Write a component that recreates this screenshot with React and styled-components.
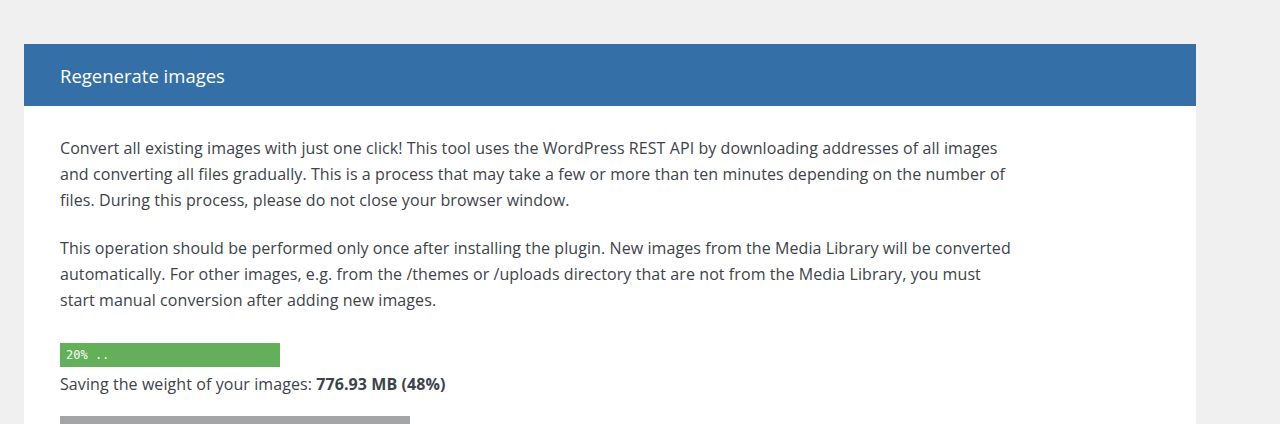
import React from 'react';
import styled, { createGlobalStyle } from 'styled-components';

const GlobalStyle = createGlobalStyle`
    html, body {
        margin: 0;
        padding: 0;
        background: #f0f0f1;
    }
    body {
        font-family: "Open Sans", "Noto Sans", sans-serif;
        color: #3c434a;
    }
`
const Page = styled.div`
    padding: 44px 84px 0 24px;
    height: 424px;
    box-sizing: border-box;
    overflow: hidden;
`
const Panel = styled.section`
    background: #fff;
    width: 1172px;
`
const Header = styled.h2`
    margin: 0;
    height: 62px;
    display: flex;
    align-items: center;
    padding: 0 36px;
    background: #346fa7;
    color: #fff;
    font-size: 18.5px;
    font-weight: 400;
    letter-spacing: 0;
`
const Body = styled.div`
    padding: 29px 36px 40px;
`
const Text = styled.p`
    margin: 0 0 22px;
    max-width: 955px;
    font-size: 16px;
    line-height: 26px;
    letter-spacing: 0.08px;
    color: #3c434a;
`
const Progress = styled.div`
    width: 220px;
    height: 24px;
    margin-top: 30px;
    background: #64b05a;
    color: #fff;
    font-family: "DejaVu Sans Mono", "Liberation Mono", monospace;
    font-size: 12px;
    display: flex;
    align-items: center;
    padding-left: 6px;
    box-sizing: border-box;
`
const Saving = styled.div`
    margin-top: 4px;
    font-size: 16px;
    line-height: 26px;
    letter-spacing: 0.08px;
    & strong {
        font-weight: 700;
    }
`
const Button = styled.div`
    margin-top: 19px;
    width: 350px;
    height: 40px;
    background: #a3a5a7;
`

const App = () => {
    return (
        <>
        <GlobalStyle />
        <Page>
            <Panel>
                <Header>Regenerate images</Header>
                <Body>
                    <Text>
                        Convert all existing images with just one click! This tool uses the WordPress REST API by downloading addresses of all images and converting all files gradually. This is a process that may take a few or more than ten minutes depending on the number of files. During this process, please do not close your browser window.
                    </Text>
                    <Text>
                        This operation should be performed only once after installing the plugin. New images from the Media Library will be converted automatically. For other images, e.g. from the /themes or /uploads directory that are not from the Media Library, you must start manual conversion after adding new images.
                    </Text>
                    <Progress>20% ..</Progress>
                    <Saving>Saving the weight of your images: <strong>776.93 MB (48%)</strong></Saving>
                    <Button />
                </Body>
            </Panel>
        </Page>
        </>
    )
}
export default App;
